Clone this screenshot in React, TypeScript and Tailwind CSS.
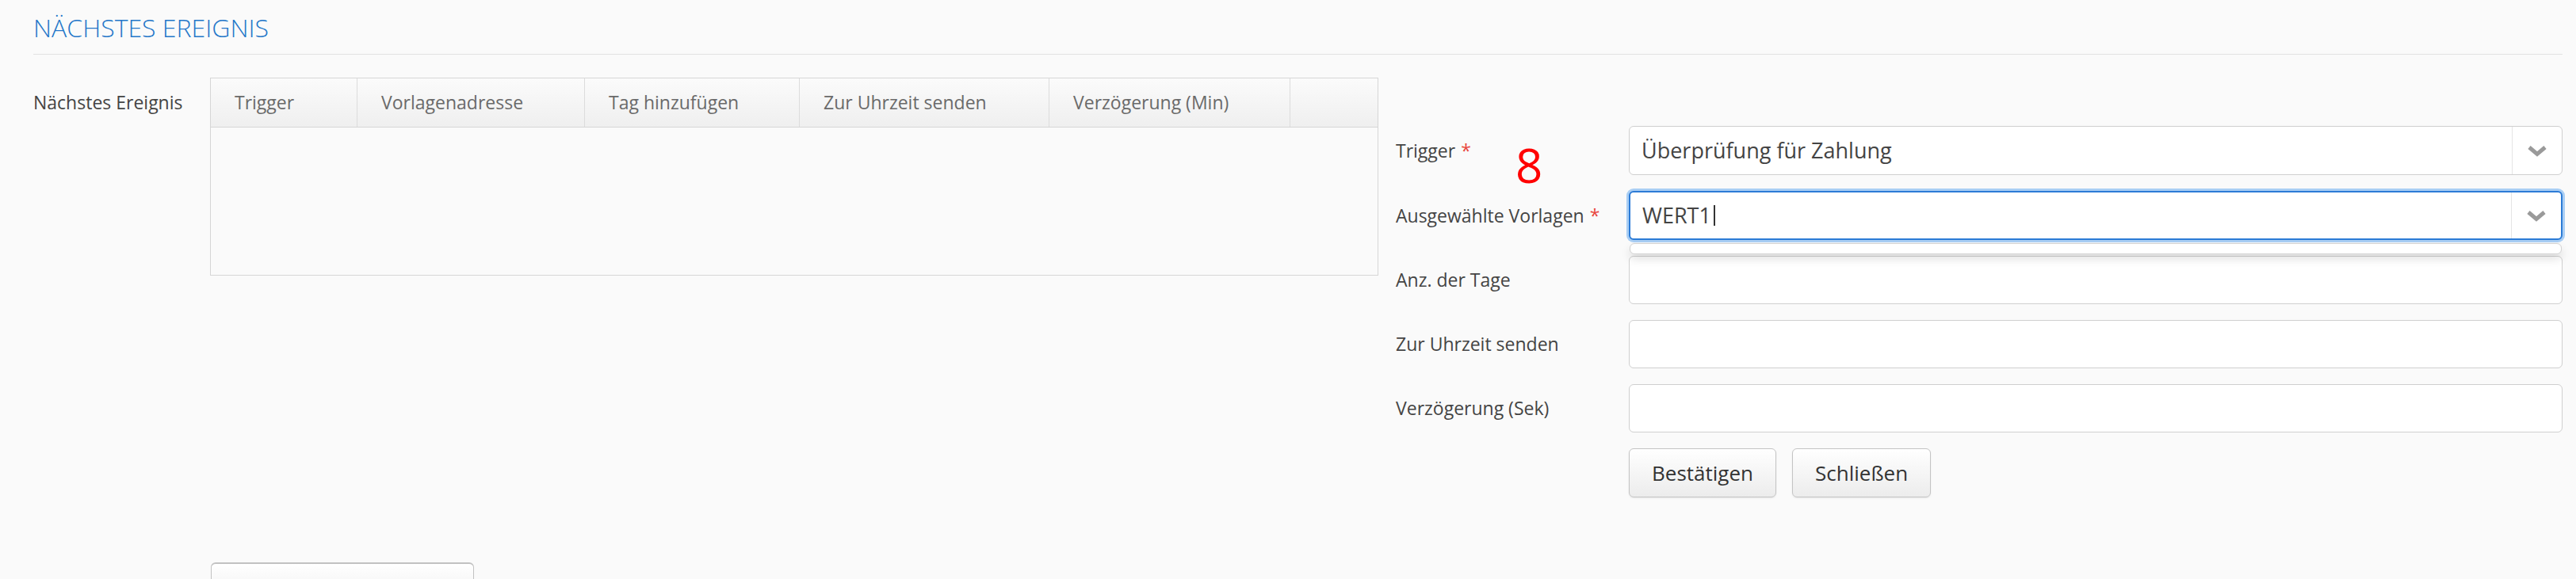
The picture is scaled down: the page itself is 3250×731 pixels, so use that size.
import { Plus } from "lucide-react";

const columns = [
  { label: "Trigger", width: "w-[185px]" },
  { label: "Vorlagenadresse", width: "w-[287px]" },
  { label: "Tag hinzufügen", width: "w-[271px]" },
  { label: "Zur Uhrzeit senden", width: "w-[315px]" },
  { label: "Verzögerung (Min)", width: "w-[304px]" },
  { label: "", width: "w-[110px]" },
];

function Chevron() {
  return (
    <svg width="26" height="15" viewBox="0 0 26 15" fill="none">
      <polyline points="3,3 13,11.5 23,3" stroke="#9a9a9a" strokeWidth="5" strokeLinejoin="miter" />
    </svg>
  );
}

function Label({ text, required }: { text: string; required?: boolean }) {
  return (
    <div className="w-[294px] shrink-0 text-[23px] text-[#444]">
      {text}
      {required && <span className="ml-[7px] text-[#e8453c]">*</span>}
    </div>
  );
}

function SelectBox({ value, focused }: { value: string; focused?: boolean }) {
  return (
    <div
      className={
        focused
          ? "relative flex h-[62px] flex-1 items-center rounded-[6px] border-2 border-[#2c7bd6] bg-white shadow-[0_0_0_3px_rgba(102,170,238,0.55)]"
          : "relative flex h-[62px] flex-1 items-center rounded-[6px] border border-[#cfcfcf] bg-white"
      }
    >
      <div className="flex flex-1 items-center pl-[15px] text-[27px] text-[#444]">
        {value}
        {focused && <span className="ml-[3px] inline-block h-[26px] w-[2px] bg-[#333]" />}
      </div>
      <div className="flex h-full w-[63px] items-center justify-center border-l border-[#e4e4e4]">
        <Chevron />
      </div>
      {focused && (
        <div className="absolute left-[-1px] right-[-1px] top-[calc(100%+6px)] z-10 h-[14px] rounded-[6px] border border-[#d2d2d2] bg-white shadow-[0_6px_12px_rgba(0,0,0,0.12)]" />
      )}
    </div>
  );
}

function TextInput() {
  return <div className="h-[61px] flex-1 rounded-[6px] border border-[#cfcfcf] bg-white" />;
}

function Button({ label }: { label: string }) {
  return (
    <button className="h-[62px] rounded-[6px] border border-[#c4c4c4] bg-gradient-to-b from-white to-[#ececec] px-[28px] text-[26px] text-[#333] shadow-[0_1px_2px_rgba(0,0,0,0.08)]">
      {label}
    </button>
  );
}

export default function App() {
  return (
    <div className="relative h-[731px] w-[3250px] overflow-hidden bg-[#fafafa] font-['Open_Sans',sans-serif]">
      <div className="pl-[42px] pr-[17px]">
        <h1 className="pt-[13px] text-[32px] font-light leading-[44px] text-[#2477c9]">NÄCHSTES EREIGNIS</h1>
        <div className="mt-[11px] h-px bg-[#e2e2e2]" />

        <div className="mt-[29px] flex items-start">
          <div className="flex h-[62px] w-[223px] shrink-0 items-center text-[23px] text-[#444]">Nächstes Ereignis</div>

          <div className="h-[250px] w-[1474px] shrink-0 border border-[#d6d6d6]">
            <div className="flex h-[62px] border-b border-[#d6d6d6] bg-gradient-to-b from-[#fbfbfb] to-[#efefef]">
              {columns.map((c, i) => (
                <div
                  key={i}
                  className={`${c.width} flex items-center pl-[30px] text-[23px] text-[#6a6a6a] ${i < columns.length - 1 ? "border-r border-[#dcdcdc]" : ""}`}
                >
                  {c.label}
                </div>
              ))}
            </div>
          </div>

          <div className="mt-[61px] flex flex-1 flex-col gap-[20px] pl-[22px]">
            <div className="flex items-center">
              <Label text="Trigger" required />
              <SelectBox value="Überprüfung für Zahlung" />
            </div>
            <div className="flex items-center">
              <Label text="Ausgewählte Vorlagen" required />
              <SelectBox value="WERT1" focused />
            </div>
            <div className="flex items-center">
              <Label text="Anz. der Tage" />
              <TextInput />
            </div>
            <div className="flex items-center">
              <Label text="Zur Uhrzeit senden" />
              <TextInput />
            </div>
            <div className="flex items-center">
              <Label text="Verzögerung (Sek)" />
              <TextInput />
            </div>
            <div className="flex items-center">
              <div className="w-[294px] shrink-0" />
              <div className="flex gap-[20px]">
                <Button label="Bestätigen" />
                <Button label="Schließen" />
              </div>
            </div>
          </div>
        </div>

        <div className="ml-[224px] mt-[82px] flex h-[62px] w-[332px] items-center rounded-[6px] border border-t-2 border-[#c2c2c2] bg-gradient-to-b from-white to-[#ececec] pl-[38px] text-[#333]">
          <Plus size={28} strokeWidth={3} />
        </div>
      </div>

      <div className="absolute left-[1912px] top-[178px] text-[60px] leading-none text-[#ff0000]">8</div>
    </div>
  );
}
